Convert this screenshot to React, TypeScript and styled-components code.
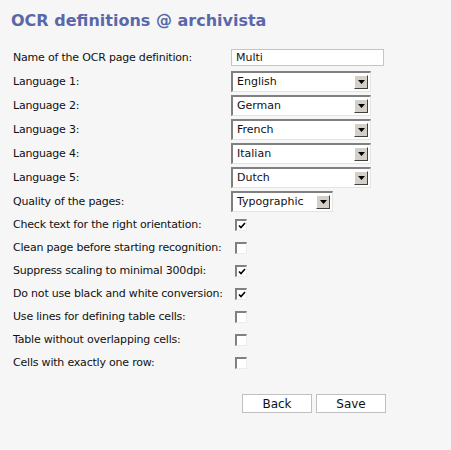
import React from "react"
import styled, { createGlobalStyle } from "styled-components"

const GlobalStyle = createGlobalStyle`
  html, body {
    margin: 0;
    padding: 0;
    background: #f6f6f6;
  }
  body {
    font-family: "DejaVu Sans", Verdana, sans-serif;
    color: #111;
  }
`

const Page = styled.div`
  width: 451px;
  height: 450px;
  box-sizing: border-box;
  padding-top: 11px;
`

const Title = styled.h1`
  margin: 0 0 16px 11px;
  font-size: 16px;
  line-height: 19px;
  font-weight: bold;
  color: #5a68aa;
`

const Form = styled.div`
  display: flex;
  flex-direction: column;
  padding-left: 13px;
`

const Row = styled.div<{ $h: number }>`
  display: flex;
  align-items: center;
  height: ${(p) => p.$h}px;
`

const Label = styled.div`
  width: 218px;
  font-size: 11px;
  letter-spacing: -0.2px;
  white-space: nowrap;
`

const TextInput = styled.div`
  width: 153px;
  height: 17px;
  box-sizing: border-box;
  border: 1px solid #c4c4c4;
  background: #fff;
  font-size: 11px;
  line-height: 15px;
  padding-left: 4px;
`

const SelectBox = styled.div<{ $w: number }>`
  display: flex;
  align-items: center;
  box-sizing: border-box;
  width: ${(p) => p.$w}px;
  height: 21px;
  border-top: 2px solid #808080;
  border-left: 2px solid #808080;
  border-right: 1px solid #e4e4e4;
  border-bottom: 1px solid #e4e4e4;
  background: #fff;
  font-size: 11px;
  padding-left: 4px;
`

const SelectText = styled.span`
  flex: 1;
`

const ArrowButton = styled.div`
  width: 14px;
  height: 14px;
  margin-right: 2px;
  box-sizing: border-box;
  background: #d4d0c8;
  border-top: 1px solid #fff;
  border-left: 1px solid #fff;
  border-right: 1px solid #404040;
  border-bottom: 1px solid #404040;
  display: flex;
  align-items: center;
  justify-content: center;
`

const Box = styled.div`
  width: 12px;
  height: 12px;
  box-sizing: border-box;
  margin-left: 4px;
  border-top: 2px solid #808080;
  border-left: 2px solid #808080;
  border-right: 1px solid #ececec;
  border-bottom: 1px solid #ececec;
  background: #fff;
  display: flex;
  align-items: center;
  justify-content: center;
`

const Buttons = styled.div`
  display: flex;
  gap: 4px;
  margin-top: 20px;
  padding-left: 229px;
`

const Button = styled.div`
  width: 70px;
  height: 19px;
  box-sizing: border-box;
  border: 1px solid #c0c0c0;
  background: #fff;
  font-size: 12px;
  display: flex;
  align-items: center;
  justify-content: center;
`

const Select = ({ value, width }: { value: string; width: number }) => (
  <SelectBox $w={width}>
    <SelectText>{value}</SelectText>
    <ArrowButton>
      <svg width="7" height="4" viewBox="0 0 7 4">
        <path d="M0 0h7L3.5 4z" fill="#000" />
      </svg>
    </ArrowButton>
  </SelectBox>
)

const Check = ({ checked }: { checked: boolean }) => (
  <Box>
    {checked && (
      <svg width="8" height="7" viewBox="0 0 8 7">
        <path d="M1 3.5L3 5.5L7 1" stroke="#000" strokeWidth="1.6" fill="none" />
      </svg>
    )}
  </Box>
)

const languages = ["English", "German", "French", "Italian", "Dutch"]

const options = [
  { label: "Check text for the right orientation:", checked: true },
  { label: "Clean page before starting recognition:", checked: false },
  { label: "Suppress scaling to minimal 300dpi:", checked: true },
  { label: "Do not use black and white conversion:", checked: true },
  { label: "Use lines for defining table cells:", checked: false },
  { label: "Table without overlapping cells:", checked: false },
  { label: "Cells with exactly one row:", checked: false },
]

export default function App() {
  return (
    <Page>
      <GlobalStyle />
      <Title>OCR definitions @ archivista</Title>
      <Form>
        <Row $h={23}>
          <Label>Name of the OCR page definition:</Label>
          <TextInput>Multi</TextInput>
        </Row>
        {languages.map((lang, i) => (
          <Row $h={24} key={lang}>
            <Label>Language {i + 1}:</Label>
            <Select value={lang} width={140} />
          </Row>
        ))}
        <Row $h={24}>
          <Label>Quality of the pages:</Label>
          <Select value="Typographic" width={102} />
        </Row>
        {options.map((o) => (
          <Row $h={23} key={o.label}>
            <Label>{o.label}</Label>
            <Check checked={o.checked} />
          </Row>
        ))}
        <Buttons>
          <Button>Back</Button>
          <Button>Save</Button>
        </Buttons>
      </Form>
    </Page>
  )
}
